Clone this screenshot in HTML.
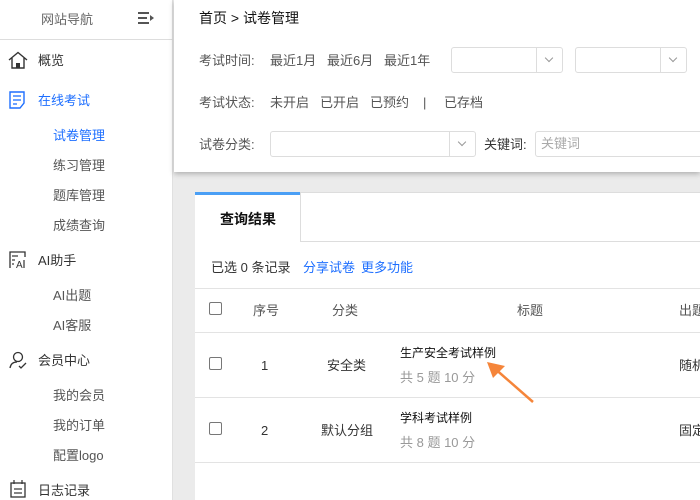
<!DOCTYPE html>
<html><head><meta charset="utf-8"><style>
*{margin:0;padding:0;box-sizing:border-box}
body{width:700px;height:500px;overflow:hidden;font-family:"Liberation Sans","Noto Sans CJK SC",sans-serif;font-size:13px;color:#333;background:#ebebeb;position:relative}
.abs{position:absolute;white-space:nowrap;line-height:15px}
#side{position:absolute;left:0;top:0;width:173px;height:500px;background:#fff;border-right:1px solid #e0e0e0}
#top{position:absolute;left:174px;top:0;width:526px;height:172px;background:#fff;box-shadow:0 2px 5px rgba(0,0,0,.25)}
#panel{position:absolute;left:195px;top:192px;width:505px;height:308px;background:#fff}
.sel{position:absolute;height:26px;border:1px solid #ddd;border-radius:3px;background:#fff}
.sel .ar{position:absolute;right:0;top:0;width:26px;height:24px;border-left:1px solid #ddd}
.sel .ar:after{content:"";position:absolute;left:9px;top:7px;width:5px;height:5px;border-right:1.5px solid #999;border-bottom:1.5px solid #999;transform:rotate(45deg)}
.cb{position:absolute;width:13px;height:13px;border:1px solid #777;border-radius:2px;background:#fff}
.g{color:#555}
</style></head><body>
<div id="side">
 <div class="abs" style="left:41px;top:12px;color:#666">网站导航</div>
 <svg class="abs" style="left:137px;top:11px" width="18" height="14"><g stroke="#555" stroke-width="2"><line x1="1" y1="2" x2="12" y2="2"/><line x1="1" y1="7" x2="10" y2="7"/><line x1="1" y1="12" x2="12" y2="12"/></g><path d="M13 4 L17 7 L13 10Z" fill="#555"/></svg>
 <div style="position:absolute;left:0;top:39px;width:173px;height:1px;background:#ddd"></div>
 <svg class="abs" style="left:8px;top:51px" width="20" height="18"><path d="M1 9 L10 1.5 L19 9 M4 7 V17 H16 V7" fill="none" stroke="#333" stroke-width="1.4"/><rect x="8" y="12" width="4" height="5" fill="#333"/></svg>
 <div class="abs" style="left:38px;top:53px">概览</div>
 <svg class="abs" style="left:9px;top:91px" width="16" height="18"><path d="M1 1 H15 V12 L11 17 H1 Z" fill="none" stroke="#1e6fff" stroke-width="1.4"/><g stroke="#1e6fff" stroke-width="1.3"><line x1="4" y1="5" x2="12" y2="5"/><line x1="4" y1="9" x2="12" y2="9"/><line x1="4" y1="13" x2="8" y2="13"/></g></svg>
 <div class="abs" style="left:38px;top:93px;color:#1e6fff">在线考试</div>
 <div class="abs" style="left:53px;top:128px;color:#1e6fff">试卷管理</div>
 <div class="abs g" style="left:53px;top:158px">练习管理</div>
 <div class="abs g" style="left:53px;top:188px">题库管理</div>
 <div class="abs g" style="left:53px;top:218px">成绩查询</div>
 <svg class="abs" style="left:9px;top:251px" width="17" height="18"><path d="M1 17 V1 H16 V6" fill="none" stroke="#333" stroke-width="1.3"/><g stroke="#333" stroke-width="1.2"><line x1="3" y1="5" x2="9" y2="5"/><line x1="3" y1="9" x2="6" y2="9"/><line x1="3" y1="13" x2="5" y2="13"/></g><text x="7" y="17" font-size="10" font-family="Liberation Sans" fill="#333">A</text><line x1="15" y1="9" x2="15" y2="17" stroke="#333" stroke-width="1.2"/></svg>
 <div class="abs" style="left:38px;top:253px">AI助手</div>
 <div class="abs g" style="left:53px;top:288px">AI出题</div>
 <div class="abs g" style="left:53px;top:318px">AI客服</div>
 <svg class="abs" style="left:9px;top:351px" width="18" height="18"><circle cx="9" cy="6" r="4.5" fill="none" stroke="#333" stroke-width="1.3"/><path d="M1 17 Q2 11 8 11 M10 15 L12 17 L17 12" fill="none" stroke="#333" stroke-width="1.3"/></svg>
 <div class="abs" style="left:38px;top:353px">会员中心</div>
 <div class="abs g" style="left:53px;top:388px">我的会员</div>
 <div class="abs g" style="left:53px;top:418px">我的订单</div>
 <div class="abs g" style="left:53px;top:448px">配置logo</div>
 <svg class="abs" style="left:10px;top:480px" width="16" height="18"><rect x="1" y="3" width="14" height="14" fill="none" stroke="#333" stroke-width="1.3"/><g stroke="#333" stroke-width="1.2"><line x1="4" y1="0" x2="4" y2="4"/><line x1="12" y1="0" x2="12" y2="4"/><line x1="4" y1="9" x2="12" y2="9"/><line x1="4" y1="13" x2="12" y2="13"/></g></svg>
 <div class="abs" style="left:38px;top:483px">日志记录</div>
</div>
<div id="top">
 <div class="abs" style="left:25px;top:11px;font-size:14px;color:#111">首页 &gt; 试卷管理</div>
 <div class="abs g" style="left:25px;top:53px">考试时间:</div>
 <div class="abs g" style="left:96px;top:53px">最近1月</div>
 <div class="abs g" style="left:153px;top:53px">最近6月</div>
 <div class="abs g" style="left:210px;top:53px">最近1年</div>
 <div class="sel" style="left:277px;top:47px;width:112px"><div class="ar"></div></div>
 <div class="sel" style="left:401px;top:47px;width:112px"><div class="ar"></div></div>
 <div class="abs g" style="left:25px;top:95px">考试状态:</div>
 <div class="abs g" style="left:96px;top:95px">未开启</div>
 <div class="abs g" style="left:146px;top:95px">已开启</div>
 <div class="abs g" style="left:196px;top:95px">已预约</div>
 <div class="abs g" style="left:249px;top:95px">|</div>
 <div class="abs g" style="left:270px;top:95px">已存档</div>
 <div class="abs g" style="left:25px;top:137px">试卷分类:</div>
 <div class="sel" style="left:96px;top:131px;width:206px"><div class="ar"></div></div>
 <div class="abs" style="left:310px;top:137px">关键词:</div>
 <div class="sel" style="left:361px;top:131px;width:180px;border-radius:3px 0 0 3px"><span style="position:absolute;left:5px;top:4px;color:#aaa;line-height:15px">关键词</span></div>
</div>
<div id="panel">
 <div style="position:absolute;left:0;top:0;width:105px;height:50px;border-top:3px solid #4a9ff5;background:#fff"></div>
 <div style="position:absolute;left:105px;top:0;width:400px;height:50px;border-left:1px solid #ddd;border-top:1px solid #ddd;border-bottom:1px solid #ddd;background:#fff"></div>
 <div class="abs" style="left:25px;top:20px;font-size:14px;color:#111;font-weight:bold">查询结果</div>
 <div class="abs" style="left:16px;top:68px">已选 0 条记录</div>
 <div class="abs" style="left:108px;top:68px;color:#1e6fff">分享试卷</div>
 <div class="abs" style="left:166px;top:68px;color:#1e6fff">更多功能</div>
 <div style="position:absolute;left:0;top:96px;width:505px;height:1px;background:#e3e3e3"></div>
 <div style="position:absolute;left:0;top:140px;width:505px;height:1px;background:#e3e3e3"></div>
 <div style="position:absolute;left:0;top:205px;width:505px;height:1px;background:#e3e3e3"></div>
 <div style="position:absolute;left:0;top:270px;width:505px;height:1px;background:#e3e3e3"></div>
 <div class="cb" style="left:14px;top:110px"></div>
 <div class="abs g" style="left:58px;top:111px">序号</div>
 <div class="abs g" style="left:137px;top:111px">分类</div>
 <div class="abs g" style="left:322px;top:111px">标题</div>
 <div class="abs g" style="left:484px;top:111px">出题</div>
 <div class="cb" style="left:14px;top:165px"></div>
 <div class="abs" style="left:66px;top:166px">1</div>
 <div class="abs" style="left:132px;top:166px">安全类</div>
 <div class="abs" style="left:205px;top:154px;font-size:12px;color:#111">生产安全考试样例</div>
 <div class="abs" style="left:205px;top:178px;color:#999">共 5 题 10 分</div>
 <div class="abs" style="left:484px;top:166px">随机</div>
 <div class="cb" style="left:14px;top:230px"></div>
 <div class="abs" style="left:66px;top:231px">2</div>
 <div class="abs" style="left:126px;top:231px">默认分组</div>
 <div class="abs" style="left:205px;top:219px;font-size:12px;color:#111">学科考试样例</div>
 <div class="abs" style="left:205px;top:243px;color:#999">共 8 题 10 分</div>
 <div class="abs" style="left:484px;top:231px">固定</div>
 <svg class="abs" style="left:290px;top:170px" width="55" height="50"><line x1="8" y1="5" x2="48" y2="40" stroke="#f5853a" stroke-width="2.5"/><path d="M2 0 L20 4 L8 16 Z" fill="#f5853a"/></svg>
</div>
</body></html>
